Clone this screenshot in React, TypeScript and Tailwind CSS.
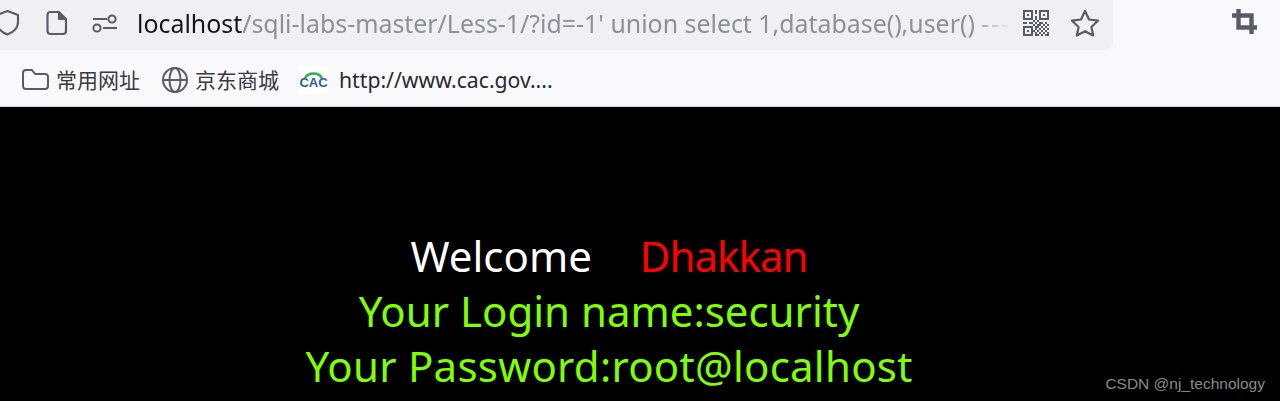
const cjk = "'Noto Sans','Noto Sans CJK SC',sans-serif";

function QrIcon() {
  const cells = [
    "1111101011111",
    "1000101010001",
    "1010100010101",
    "1000101010001",
    "1111101011111",
    "0000010100000",
    "1101101011010",
    "0000010110101",
    "1111101101010",
    "1000101010101",
    "1010110101010",
    "1000101010101",
    "1111101101011",
  ];
  return (
    <svg width="26" height="26" viewBox="0 0 13 13" fill="#5b5b66" shapeRendering="crispEdges">
      {cells.flatMap((r, y) =>
        r.split("").map((c, x) => (c === "1" ? <rect key={x + "-" + y} x={x} y={y} width="1" height="1" /> : null))
      )}
    </svg>
  );
}

export default function App() {
  return (
    <div className="relative flex h-[401px] w-[1280px] flex-col overflow-hidden bg-black" style={{ fontFamily: cjk }}>
      <header className="h-[107px] shrink-0 border-b border-[#d4d4d6] bg-[#f9f9fb]">
        <div className="flex h-[50px] items-start">
          <div className="flex h-[50px] w-[1113px] items-center rounded-br-lg bg-[#f0f0f4] pb-[5px]">
            <svg className="ml-[-5px] shrink-0" width="25" height="27" viewBox="0 0 25 27" fill="none" stroke="#5b5b66" strokeWidth="2.2" strokeLinejoin="round">
              <path d="M12.5 2 L23 6 V13 C23 19 18 23.5 12.5 25.5 C7 23.5 2 19 2 13 V6 Z" />
            </svg>
            <svg className="ml-[26px] shrink-0" width="22" height="26" viewBox="0 0 22 26" fill="none" stroke="#5b5b66" strokeWidth="2.2" strokeLinejoin="round">
              <path d="M4 2 H13 L20 9 V21 A3 3 0 0 1 17 24 H4 A3 3 0 0 1 1.5 21 V5 A3 3 0 0 1 4 2 Z" />
              <path d="M13 2 V9 H20" fill="#5b5b66" />
            </svg>
            <svg className="ml-[24px] shrink-0" width="26" height="20" viewBox="0 0 26 20" fill="none" stroke="#5b5b66" strokeWidth="2">
              <path d="M1 6 H15" />
              <circle cx="20" cy="6" r="3.6" />
              <circle cx="5" cy="15" r="3.6" />
              <path d="M11 15 H25" />
            </svg>
            <div className="ml-[19px] w-[878px] shrink-0 overflow-hidden whitespace-nowrap text-[24.9px] leading-[32px] text-[#8f8f98] [mask-image:linear-gradient(to_right,black_95%,transparent_99.5%)]">
              <span className="text-[#15141a]">localhost</span>/sqli-labs-master/Less-1/?id=-1' union select 1,database(),user() <span className="tracking-[2px]">---</span>
            </div>
            <div className="ml-[8px] shrink-0"><QrIcon /></div>
            <svg className="ml-[21px] shrink-0" width="30" height="28" viewBox="0 0 30 28" fill="none" stroke="#5b5b66" strokeWidth="2.2" strokeLinejoin="round">
              <path d="M15 2 L19 10.5 L28 11.7 L21.4 18 L23.2 26.5 L15 22.2 L6.8 26.5 L8.6 18 L2 11.7 L11 10.5 Z" />
            </svg>
          </div>
          <svg className="ml-[119px] mt-[9px] shrink-0" width="25" height="25" viewBox="0 0 25 25" fill="none" stroke="#5b5b66" strokeWidth="4.4">
            <path d="M0 6.5 H19.5 V25" />
            <path d="M6.5 0 V18.5 H25" />
          </svg>
        </div>
        <nav className="flex h-[56px] items-center pt-[3px] text-[21px] text-[#3a3a40]">
          <svg className="ml-[22px] shrink-0" width="27" height="23" viewBox="0 0 27 23" fill="none" stroke="#5b5b66" strokeWidth="2" strokeLinejoin="round">
            <path d="M4 2 H10 L13 6 H23 A3 3 0 0 1 26 9 V18 A3 3 0 0 1 23 21 H4 A3 3 0 0 1 1 18 V5 A3 3 0 0 1 4 2 Z" />
          </svg>
          <span className="ml-[7px] whitespace-nowrap leading-[28px]">常用网址</span>
          <svg className="ml-[21px] shrink-0" width="28" height="28" viewBox="0 0 28 28" fill="none" stroke="#5b5b66" strokeWidth="2">
            <circle cx="14" cy="14" r="12" />
            <ellipse cx="14" cy="14" rx="5.5" ry="12" />
            <path d="M2 14 H26" />
          </svg>
          <span className="ml-[6px] whitespace-nowrap leading-[28px]">京东商城</span>
          <svg className="ml-[20px] shrink-0 bg-white" width="29" height="28" viewBox="0 0 29 28" fill="none">
            <path d="M6 12 A9.5 8 0 0 1 23 12" stroke="#35a854" strokeWidth="2.4" />
            <text x="14.5" y="21" textAnchor="middle" fontSize="13" fontWeight="700" fill="#1f5f9e" fontFamily="'Liberation Sans',sans-serif">CAC</text>
          </svg>
          <span className="ml-[11px] whitespace-nowrap text-[21.2px] leading-[28px] text-[#2a2a2e]">http://www.cac.gov....</span>
        </nav>
      </header>
      <main className="w-[1218px] pt-[121px] text-center text-[42px] leading-[55px] text-[#80ff00]">
        <div className="whitespace-nowrap text-white">
          Welcome<span className="ml-[48px] tracking-[-1px] text-[#ff0000]">Dhakkan</span>
        </div>
        <div>Your Login name:security</div>
        <div className="tracking-[0.25px]">Your Password:root@localhost</div>
      </main>
      <div className="absolute bottom-[7px] right-[15px] text-[15.5px] leading-5 text-[#8a8a8a]" style={{ fontFamily: "'Liberation Sans',sans-serif" }}>
        CSDN @nj_technology
      </div>
    </div>
  );
}
